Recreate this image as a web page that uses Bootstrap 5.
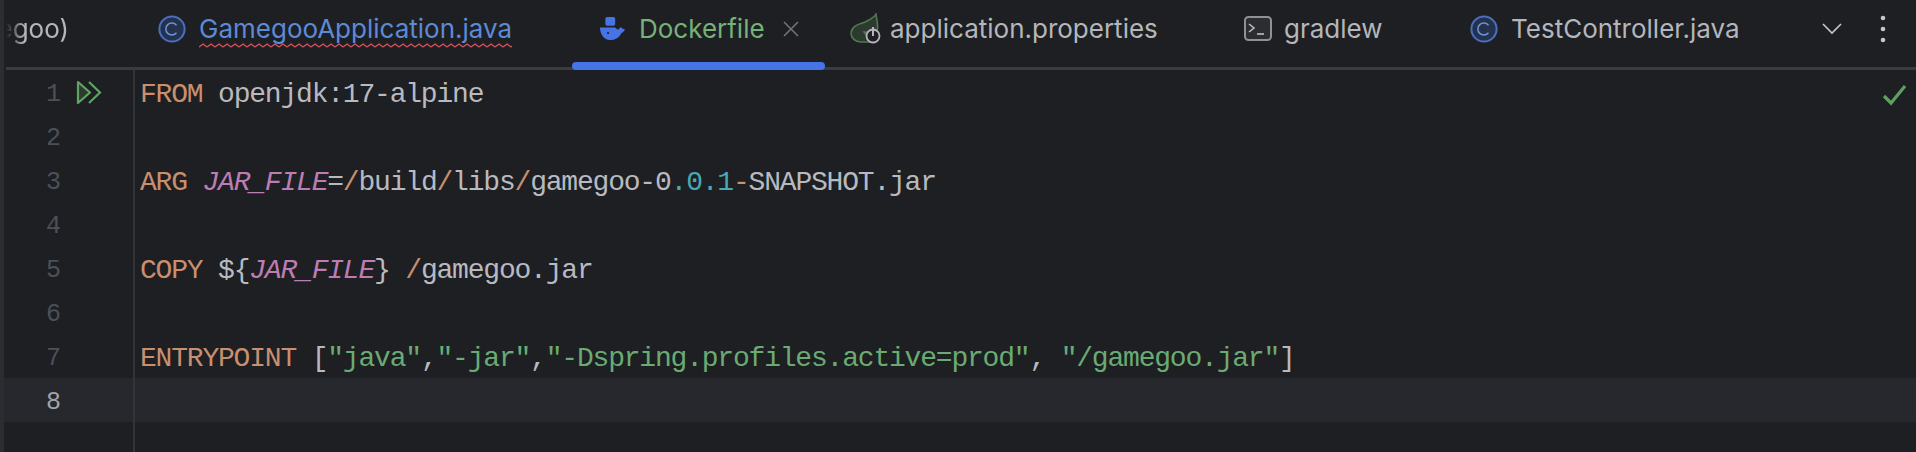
<!DOCTYPE html>
<html lang="en"><head><meta charset="utf-8">
<link href="https://cdn.jsdelivr.net/npm/bootstrap@5.3.0/dist/css/bootstrap.min.css" rel="stylesheet">
<style>
html,body{height:100%;background:#1e1f22;overflow:hidden}
.ide{height:452px;background:#1e1f22;border-left:4px solid #2b2d30;overflow:hidden}
.tabbar{flex:none;height:70px;font-family:Inter,"Liberation Sans",sans-serif;font-size:26px;color:#b4b6bc;position:relative;background:linear-gradient(#393b40,#393b40) 2px 100%/100% 3px no-repeat}
.tabx{position:absolute;top:0;height:57px;display:flex;align-items:center;white-space:nowrap;line-height:1}
.tabbar svg{flex:none}
.active-bar{position:absolute;left:568px;width:253px;top:62px;height:8px;background:#4674e6;border-radius:4px}
.fade-l{left:0;width:65px;justify-content:flex-end;overflow:hidden;-webkit-mask-image:linear-gradient(90deg,transparent 2px,#000 20px);mask-image:linear-gradient(90deg,transparent 2px,#000 20px)}
.wave{position:absolute;left:0;right:0;bottom:-6px;height:5px}
.gap-ic{margin-left:12px}
.t-blue{color:#5c8ad6}.t-green{color:#74b27a}
.editor{flex:1 1 0;min-height:0;font-family:"Liberation Mono",monospace;font-size:28px;letter-spacing:-1.2px;line-height:44px;color:#b8bac0}
.cline{height:44px;display:flex;white-space:pre}
.num{width:57px;flex:none;text-align:right;color:#4b5059;font-size:25px;letter-spacing:0;padding-top:3px}
.runcell{width:74px;flex:none;border-right:2px solid #313438;display:flex;align-items:center;padding-left:15px}
.code{padding-left:5px;padding-top:3px}
.cur{background:#26282e}
.cur .num{color:#a1a3ab}
.k{color:#c98f6e}.v{color:#bd7db4}.v{font-style:italic}.s{color:#6aab73}.b{color:#45a9b7}
.ok{position:absolute;right:8px;top:14px}
</style></head><body>
<div class="ide d-flex flex-column">
 <div class="tabbar">
  <div class="tabx fade-l"><span>egoo)</span></div>
  <div class="tabx t-blue" style="left:154px">
   <svg width="28" height="28" viewBox="0 0 28 28"><circle cx="14" cy="14" r="12.6" fill="#25324d" stroke="#4a6fc0" stroke-width="2"/><path d="M18.5 10.2a6 6 0 1 0 0 7.6" fill="none" stroke="#6f94dd" stroke-width="1.5"/></svg>
   <span class="position-relative" style="margin-left:13px">GamegooApplication.java
    <svg class="wave" width="100%" height="5" preserveAspectRatio="none"><defs><pattern id="w" width="8" height="5" patternUnits="userSpaceOnUse"><path d="M0 4L4 1L8 4" fill="none" stroke="#d9545d" stroke-width="1.2"/></pattern></defs><rect width="100%" height="5" fill="url(#w)"/></svg>
   </span>
  </div>
  <div class="tabx t-green" style="left:594px">
   <svg width="29" height="25" viewBox="0 0 30 28"><rect x="7" y="1" width="11" height="10" rx="2" fill="#4674e6"/><path d="M1 13h17c1 1 2 2 3 2 2 0 3-3 3-3l2 2 3 1c-1 2-2 3-4 4-2 5-7 8-13 8C6 27 1 21 1 13z" fill="#4674e6"/><circle cx="10" cy="19" r="1.2" fill="#1e1f22"/></svg>
   <span class="gap-ic">Dockerfile</span>
   <svg style="margin-left:18px" width="16" height="16" viewBox="0 0 16 16"><path d="M1 1L15 15M15 1L1 15" stroke="#6f7278" stroke-width="1.6"/></svg>
  </div>
  <div class="tabx" style="left:846px">
   <svg width="31" height="31" viewBox="0 0 31 31"><path d="M26 1c.5 5 2 9 1.500 15-1 2-2 3-4 3H14l8 10H11C5 29 1 25 1 20 2 12 10 11 15 9c4-2 9-4 11-8z" fill="#2c3b2e" stroke="#4f7a50" stroke-width="1.600"/><circle cx="23" cy="23" r="6.500" fill="#1e1f22" stroke="#b4b6bc" stroke-width="1.800"/><path d="M23 14v9" stroke="#b4b6bc" stroke-width="2"/></svg>
   <span style="margin-left:9px">application.properties</span>
  </div>
  <div class="tabx" style="left:1240px">
   <svg width="28" height="25" viewBox="0 0 28 25"><rect x="1" y="1" width="26" height="23" rx="3.500" fill="#2b2d30" stroke="#8f9197" stroke-width="2"/><path d="M5 8l5 4-5 4" fill="none" stroke="#bcbec4" stroke-width="1.600"/><path d="M13 18h7" stroke="#bcbec4" stroke-width="1.600"/></svg>
   <span class="gap-ic">gradlew</span>
  </div>
  <div class="tabx" style="left:1466px">
   <svg width="28" height="28" viewBox="0 0 28 28"><circle cx="14" cy="14" r="12.600" fill="#25324d" stroke="#4a6fc0" stroke-width="2"/><path d="M18.500 10.200a6 6 0 1 0 0 7.600" fill="none" stroke="#6f94dd" stroke-width="1.500"/></svg>
   <span style="margin-left:13px">TestController.java</span>
  </div>
  <div class="tabx" style="left:1818px"><svg width="20" height="12" viewBox="0 0 20 12"><path d="M1 1l9 9 9-9" fill="none" stroke="#c5c7cc" stroke-width="1.600"/></svg></div>
  <div class="tabx" style="left:1876px"><svg width="6" height="28" viewBox="0 0 6 28"><circle cx="3" cy="3" r="2.300" fill="#c5c7cc"/><circle cx="3" cy="14" r="2.300" fill="#c5c7cc"/><circle cx="3" cy="25" r="2.300" fill="#c5c7cc"/></svg></div>
  <div class="active-bar"></div>
 </div>
 <div class="editor position-relative">
  <svg class="ok" width="26" height="22" viewBox="0 0 26 22"><path d="M2 12l7 7L23 2" fill="none" stroke="#5f9f63" stroke-width="3.200"/></svg>
  <div class="cline"><div class="num">1</div><div class="runcell"><svg width="26" height="25" viewBox="0 0 26 25"><path d="M2 2l12 10.500L2 23z" fill="#2c3b2e" stroke="#5fa463" stroke-width="2.200" stroke-linejoin="round"/><path d="M13 2l11 10.500L13 23" fill="none" stroke="#5fa463" stroke-width="2.200"/></svg></div><div class="code"><span class="k">FROM</span> openjdk:17-alpine</div></div>
  <div class="cline"><div class="num">2</div><div class="runcell"></div><div class="code"></div></div>
  <div class="cline"><div class="num">3</div><div class="runcell"></div><div class="code"><span class="k">ARG</span> <span class="v">JAR_FILE</span>=<span class="k">/</span>build<span class="k">/</span>libs<span class="k">/</span>gamegoo-0<span class="b">.0.1</span><span class="k">-</span>SNAPSHOT.jar</div></div>
  <div class="cline"><div class="num">4</div><div class="runcell"></div><div class="code"></div></div>
  <div class="cline"><div class="num">5</div><div class="runcell"></div><div class="code"><span class="k">COPY</span> ${<span class="v">JAR_FILE</span>} <span class="k">/</span>gamegoo.jar</div></div>
  <div class="cline"><div class="num">6</div><div class="runcell"></div><div class="code"></div></div>
  <div class="cline"><div class="num">7</div><div class="runcell"></div><div class="code"><span class="k">ENTRYPOINT</span> [<span class="s">"java"</span>,<span class="s">"-jar"</span>,<span class="s">"-Dspring.profiles.active=prod"</span>, <span class="s">"/gamegoo.jar"</span>]</div></div>
  <div class="cline cur"><div class="num">8</div><div class="runcell"></div><div class="code"></div></div>
  <div class="cline"><div class="num"></div><div class="runcell"></div><div class="code"></div></div>
 </div>
</div>
<script src="https://cdn.jsdelivr.net/npm/bootstrap@5.3.0/dist/js/bootstrap.bundle.min.js"></script>
</body></html>
